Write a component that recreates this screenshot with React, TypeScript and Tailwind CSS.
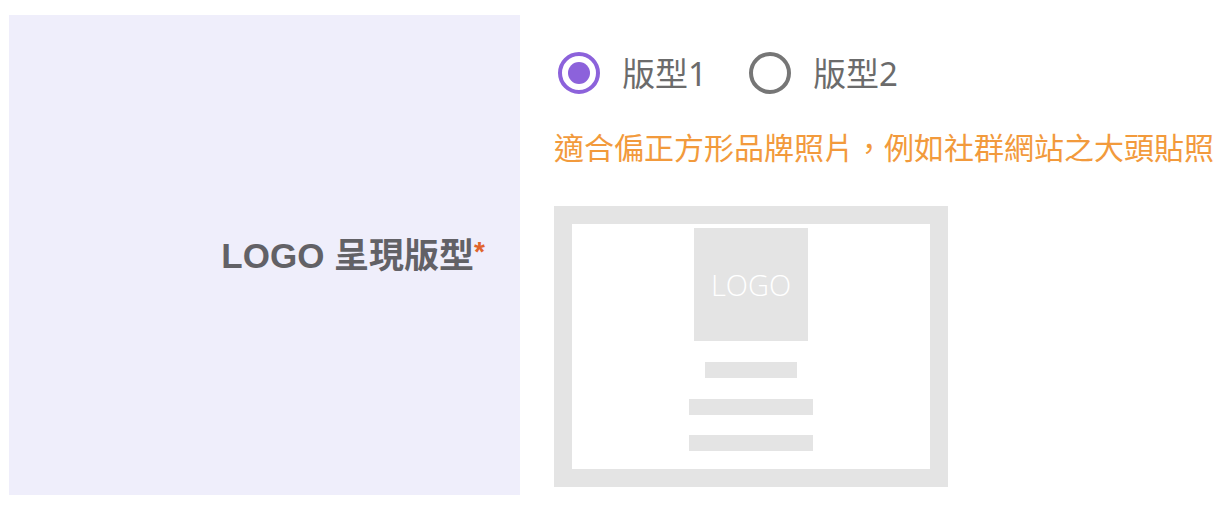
import { useState } from "react";

const CJK = "font-['Noto_Sans','Noto_Sans_CJK_TC',sans-serif]";

function Radio({
  label,
  checked,
  onSelect,
}: {
  label: string;
  checked: boolean;
  onSelect: () => void;
}) {
  return (
    <button type="button" onClick={onSelect} className="flex items-center gap-[22px]">
      <span
        className={
          checked
            ? "flex h-[42px] w-[42px] items-center justify-center rounded-full border-[4px] border-[#8c62db]"
            : "flex h-[42px] w-[42px] items-center justify-center rounded-full border-[4px] border-[#767676]"
        }
      >
        {checked && <span className="h-[22px] w-[22px] rounded-full bg-[#8c62db]" />}
      </span>
      <span className={`text-[33px] leading-none text-[#6b6b6b] ${CJK}`}>{label}</span>
    </button>
  );
}

export default function App() {
  const [layout, setLayout] = useState(1);

  return (
    <div className="flex h-[506px] w-[1230px] items-start bg-white">
      <div className="ml-[9px] mt-[15px] flex h-[480px] w-[511px] items-center justify-end bg-[#efeefb] pr-[35px]">
        <p
          className={`text-[35px] font-bold leading-none text-[#626166] font-['Liberation_Sans','Noto_Sans_CJK_TC',sans-serif]`}
        >
          LOGO 呈現版型<span className="align-top text-[28px] text-[#e0642c]">*</span>
        </p>
      </div>

      <div className="ml-[34px] flex flex-col pt-[52px]">
        <div className="ml-[4px] flex items-center gap-[42px]">
          <Radio label="版型1" checked={layout === 1} onSelect={() => setLayout(1)} />
          <Radio label="版型2" checked={layout === 2} onSelect={() => setLayout(2)} />
        </div>

        <p className={`mt-[33px] text-[30px] leading-[42px] text-[#f29a3c] ${CJK}`}>
          適合偏正方形品牌照片，例如社群網站之大頭貼照
        </p>

        <div className="mt-[37px] flex h-[281px] w-[394px] flex-col items-center border-[18px] border-[#e4e4e4] bg-white pt-[4px]">
          <div className="flex h-[113px] w-[114px] items-center justify-center bg-[#e4e4e4]">
            <span className="font-['Open_Sans',sans-serif] text-[29px] font-light text-white">LOGO</span>
          </div>
          <div className="mt-[21px] h-[16px] w-[92px] bg-[#e4e4e4]" />
          <div className="mt-[21px] h-[16px] w-[124px] bg-[#e4e4e4]" />
          <div className="mt-[20px] h-[16px] w-[124px] bg-[#e4e4e4]" />
        </div>
      </div>
    </div>
  );
}
